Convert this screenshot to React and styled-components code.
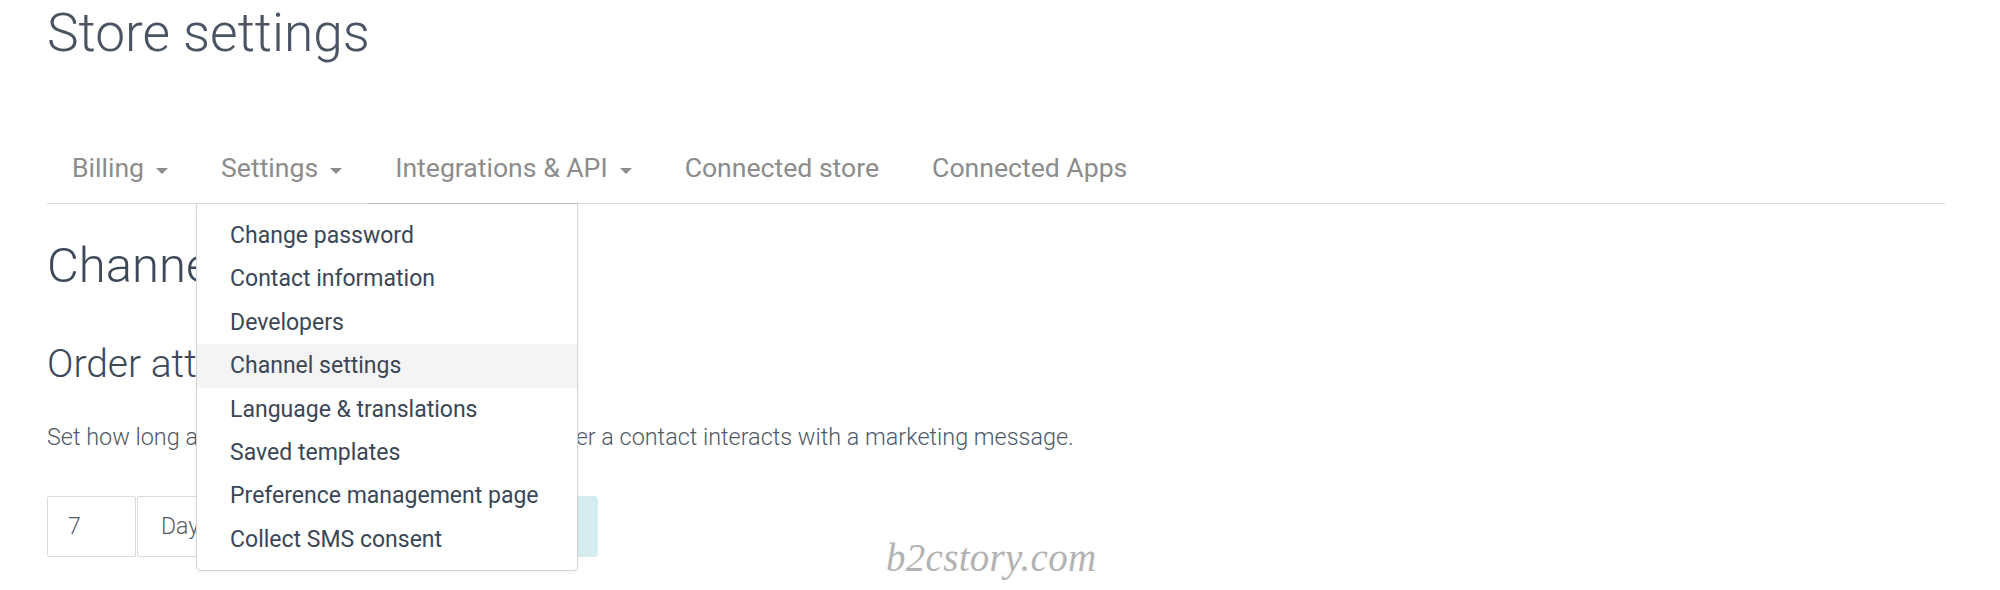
import React from "react";
import styled, { createGlobalStyle } from "styled-components";

const GlobalStyle = createGlobalStyle`
  body {
    margin: 0;
    background: #fff;
    font-family: Roboto, "Liberation Sans", sans-serif;
  }
`;

const Page = styled.div`
  position: relative;
  width: 2000px;
  height: 590px;
  overflow: hidden;
  box-sizing: border-box;
  padding: 1px 55px 0 47px;
`;

const Title = styled.h1`
  margin: 0;
  font-size: 53.3px;
  line-height: 65px;
  font-weight: 300;
  color: #4a5462;
`;

const TabBar = styled.ul`
  list-style: none;
  display: flex;
  margin: 67px 0 0;
  padding: 0;
  border-bottom: 1px solid #d9d9d9;
`;

const Tab = styled.li`
  position: relative;
  display: flex;
  align-items: center;
  gap: 12px;
  padding: 20px 28px 20px 25px;
  font-size: 26.6px;
  line-height: 30px;
  color: #8c8c8c;
`;

const Caret = styled.span`
  width: 0;
  height: 0;
  margin-top: 5px;
  border-left: 6px solid transparent;
  border-right: 6px solid transparent;
  border-top: 6px solid #8c8c8c;
`;

const Menu = styled.ul`
  position: absolute;
  top: 100%;
  left: 0;
  z-index: 5;
  width: 382px;
  box-sizing: border-box;
  margin: 0;
  padding: 10px 0 9px;
  list-style: none;
  background: #fff;
  border: 1px solid #d4d4d4;
  border-radius: 0 0 5px 5px;
  box-shadow: 0 2px 4px rgba(0, 0, 0, 0.06);

  &::before {
    content: "";
    position: absolute;
    top: -1px;
    left: 171px;
    right: -1px;
    height: 1px;
    background: #b9b9b9;
  }
`;

const MenuItem = styled.li`
  height: 43.4px;
  padding: 0 33px;
  font-size: 23px;
  line-height: 43.4px;
  color: #3b4656;
  white-space: nowrap;
  background: ${(p) => (p.active ? "#f4f4f4" : "transparent")};
`;

const Heading = styled.h2`
  margin: 33px 0 0;
  font-size: 49px;
  line-height: 1.2;
  font-weight: 300;
  color: #3d4959;
`;

const SubHeading = styled.h3`
  margin: 45px 0 0;
  font-size: 39px;
  line-height: 1.2;
  font-weight: 300;
  color: #3d4959;
`;

const Text = styled.p`
  margin: 33px 0 0;
  font-size: 23.4px;
  line-height: 33px;
  font-weight: 300;
  color: #4f5866;
  white-space: nowrap;
`;

const FormRow = styled.div`
  display: flex;
  gap: 1px;
  margin-top: 42px;
  height: 61px;
`;

const Field = styled.div`
  display: flex;
  align-items: center;
  box-sizing: border-box;
  width: ${(p) => p.w}px;
  padding-left: ${(p) => p.pad}px;
  border: 1px solid #dadada;
  border-radius: 2px;
  font-size: 23px;
  font-weight: 300;
  color: #555d69;
`;

const SaveButton = styled.button`
  width: 280px;
  margin-left: 10px;
  border: 0;
  border-radius: 4px;
  background: #d5ecee;
  color: #5a9ea4;
  font: 400 22px Roboto, sans-serif;
`;

const Watermark = styled.div`
  position: absolute;
  left: 886px;
  top: 535px;
  font-family: "Liberation Serif", serif;
  font-style: italic;
  font-size: 39px;
  color: #b3b3b3;
  letter-spacing: 0.3px;
`;

const settingsItems = [
  "Change password",
  "Contact information",
  "Developers",
  "Channel settings",
  "Language & translations",
  "Saved templates",
  "Preference management page",
  "Collect SMS consent",
];

export default function App() {
  return (
    <>
      <GlobalStyle />
      <Page>
        <Title>Store settings</Title>
        <TabBar>
          <Tab>
            Billing <Caret />
          </Tab>
          <Tab>
            Settings <Caret />
            <Menu>
              {settingsItems.map((item) => (
                <MenuItem key={item} active={item === "Channel settings"}>
                  {item}
                </MenuItem>
              ))}
            </Menu>
          </Tab>
          <Tab>
            Integrations &amp; API <Caret />
          </Tab>
          <Tab>Connected store</Tab>
          <Tab>Connected Apps</Tab>
        </TabBar>

        <Heading>Channel settings</Heading>
        <SubHeading>Order attribution</SubHeading>
        <Text>
          Set how long an order is attributed to a message after a contact
          interacts with a marketing message.
        </Text>
        <FormRow>
          <Field w={89} pad={20}>
            7
          </Field>
          <Field w={170} pad={23}>
            Days
          </Field>
          <SaveButton>Save</SaveButton>
        </FormRow>
        <Watermark>b2cstory.com</Watermark>
      </Page>
    </>
  );
}
